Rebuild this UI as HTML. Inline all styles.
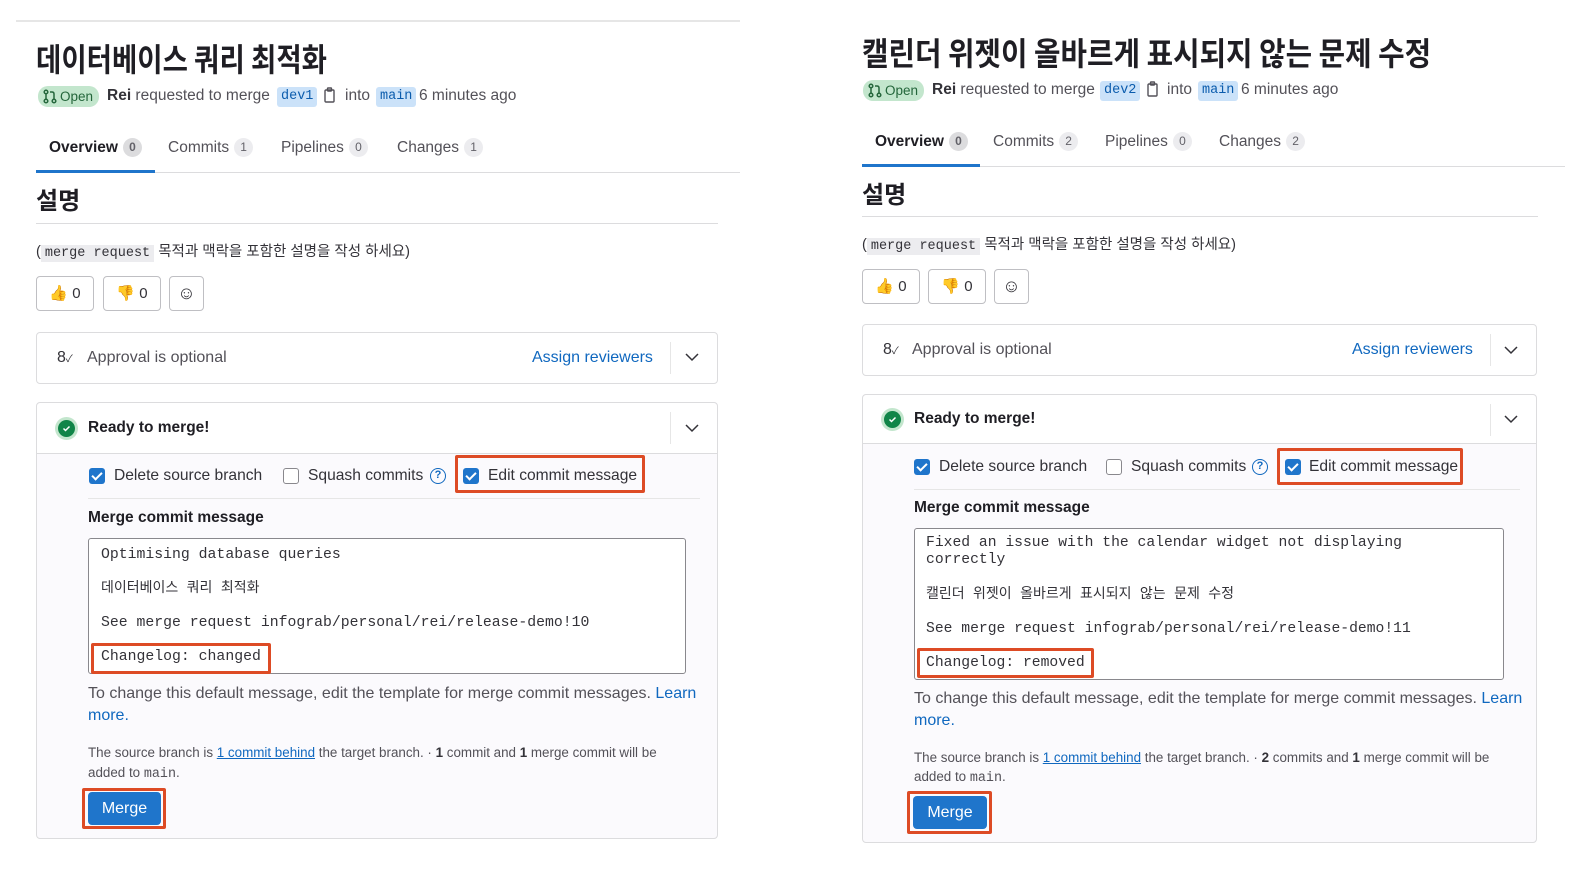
<!DOCTYPE html>
<html><head><meta charset="utf-8"><style>
*{box-sizing:border-box;margin:0;padding:0}
body{width:1580px;height:874px;background:#fff;position:relative;overflow:hidden;font-family:"Liberation Sans","Noto Sans CJK KR",sans-serif;color:#333238}
.a{position:absolute}
.t{position:absolute;white-space:nowrap;line-height:20px;font-size:16px}
.title{position:absolute;white-space:nowrap;font-size:32px;font-weight:bold;color:#1f1e24;transform-origin:left center;line-height:40px;font-family:"Noto Sans CJK KR",sans-serif}
.badge{position:absolute;background:#c3e6cd;color:#24663b;border-radius:10px;height:21px;font-size:13.5px;line-height:21px;padding-left:22px;padding-right:6px}
.code{position:absolute;background:#cbe2f9;color:#0b5cad;font-family:"Liberation Mono",monospace;font-size:13.5px;height:20px;line-height:20px;padding:0 4px;border-radius:3px}
.cnt{display:inline-block;background:#ececef;color:#626168;border-radius:10px;font-size:12px;min-width:19px;height:19px;line-height:19px;text-align:center;margin-left:5px;vertical-align:1px}
.box{position:absolute;border:1px solid #dcdcde;border-radius:4px;background:#fff}
.btn{position:absolute;border:1px solid #bfbfc3;border-radius:4px;background:#fff;height:35px;font-size:15px;line-height:33px;text-align:center}
.cb{position:absolute;width:16px;height:16px;border-radius:3px}
.on{background:#1f75cb}
.on::after{content:"";position:absolute;left:5px;top:2px;width:4px;height:8px;border:solid #fff;border-width:0 2px 2px 0;transform:rotate(45deg)}
.off{border:1px solid #89888d;background:#fff}
.red{position:absolute;border:3px solid #dd4b25;border-radius:2px}
.mono{position:absolute;white-space:nowrap;font-family:"Liberation Mono","Noto Sans CJK KR",monospace;font-size:14.8px;line-height:20px;color:#333238}
.link{color:#1068bf}
.hr{position:absolute;height:1px;background:#dcdcde}
.tab{font-size:15.5px}
.sm{font-size:13.4px}
.ck{font-size:15.6px}
</style></head><body>

<!-- LEFT PANEL -->
<div class="hr" style="left:16px;top:20px;width:724px;height:2px;background:#e6e6e6"></div>
<div class="title" style="left:36px;top:38px;transform:scaleX(0.86)">데이터베이스 쿼리 최적화</div>
<div class="badge" style="left:38px;top:86px">Open</div>
<svg class="a" style="left:43px;top:89px" width="14" height="15" viewBox="0 0 14 15" fill="none" stroke="#24663b" stroke-width="1.5"><circle cx="3" cy="3" r="1.8"/><circle cx="3" cy="12" r="1.8"/><circle cx="11" cy="12" r="1.8"/><path d="M3 5v5M11 10V5Q11 3 9 3H7"/></svg>
<div class="t" style="left:107px;top:86px;color:#535158;font-size:15.5px"><b style="color:#333238">Rei</b> requested to merge</div>
<div class="code" style="left:277px;top:87px">dev1</div>
<svg class="a" style="left:322px;top:87px" width="16" height="18" viewBox="0 0 16 18" fill="none" stroke="#535158" stroke-width="1.4"><rect x="3" y="3" width="9" height="12" rx="1"/><rect x="5.5" y="1" width="4" height="3" rx="0.5"/></svg>
<div class="t" style="left:345px;top:86px;color:#535158;font-size:15.5px">into</div>
<div class="code" style="left:376px;top:87px">main</div>
<div class="t" style="left:419px;top:86px;color:#535158;font-size:15.5px">6 minutes ago</div>

<div class="t tab" style="left:49px;top:138px;font-weight:bold;color:#1f1e24">Overview<span class="cnt" style="background:#dcdcde">0</span></div>
<div class="t tab" style="left:168px;top:138px;color:#535158">Commits<span class="cnt">1</span></div>
<div class="t tab" style="left:281px;top:138px;color:#535158">Pipelines<span class="cnt">0</span></div>
<div class="t tab" style="left:397px;top:138px;color:#535158">Changes<span class="cnt">1</span></div>
<div class="hr" style="left:36px;top:172px;width:704px"></div>
<div class="a" style="left:36px;top:170px;width:119px;height:3px;background:#1f75cb"></div>

<div class="t" style="left:36px;top:188px;font-size:24px;line-height:28px;font-weight:bold;color:#1f1e24">설명</div>
<div class="hr" style="left:36px;top:223px;width:682px"></div>
<div class="t" style="left:36px;top:242px;font-size:14.5px">(<span style="font-family:'Liberation Mono',monospace;background:#ececef;padding:1px 4px;font-size:13.5px">merge request</span> 목적과 맥락을 포함한 설명을 작성 하세요)</div>
<div class="btn" style="left:36px;top:276px;width:58px">👍 0</div>
<div class="btn" style="left:103px;top:276px;width:58px">👎 0</div>
<div class="btn" style="left:169px;top:276px;width:35px;font-size:18px">☺</div>

<div class="box" style="left:36px;top:332px;width:682px;height:52px"></div>
<div class="t" style="left:57px;top:348px;color:#333238">8<span style="font-size:10px">✓</span></div>
<div class="t" style="left:87px;top:348px;color:#535158">Approval is optional</div>
<div class="t link" style="left:532px;top:348px">Assign reviewers</div>
<div class="a" style="left:670px;top:342px;width:1px;height:32px;background:#e6e6e6"></div>
<svg class="a" style="left:685px;top:352px" width="14" height="10" viewBox="0 0 14 10"><path d="M1 2l6 6 6-6" fill="none" stroke="#333238" stroke-width="1.5"/></svg>

<div class="box" style="left:36px;top:402px;width:682px;height:437px;background:#fbfafd"></div>
<div class="a" style="left:37px;top:403px;width:680px;height:51px;background:#fff;border-bottom:1px solid #dcdcde;border-radius:4px 4px 0 0"></div>
<div class="a" style="left:55px;top:417px;width:23px;height:23px;border-radius:50%;background:#c3e6cd"></div>
<div class="a" style="left:58px;top:420px;width:17px;height:17px;border-radius:50%;background:#108548"></div>
<svg class="a" style="left:62px;top:424px" width="9" height="9" viewBox="0 0 9 9"><path d="M1.5 4.5l2 2 4-4" fill="none" stroke="#fff" stroke-width="1.5"/></svg>
<div class="t" style="left:88px;top:418px;font-weight:bold;color:#1f1e24;font-size:15.5px">Ready to merge!</div>
<div class="a" style="left:670px;top:412px;width:1px;height:32px;background:#e6e6e6"></div>
<svg class="a" style="left:685px;top:423px" width="14" height="10" viewBox="0 0 14 10"><path d="M1 2l6 6 6-6" fill="none" stroke="#333238" stroke-width="1.5"/></svg>

<div class="cb on" style="left:89px;top:468px"></div>
<div class="t ck" style="left:114px;top:466px">Delete source branch</div>
<div class="cb off" style="left:283px;top:468px"></div>
<div class="t ck" style="left:308px;top:466px">Squash commits</div>
<div class="a" style="left:430px;top:468px;width:16px;height:16px;border:1.5px solid #1068bf;border-radius:50%;color:#1068bf;font-size:11px;line-height:13px;text-align:center;font-weight:bold">?</div>
<div class="red" style="left:455px;top:455px;width:190px;height:38px"></div>
<div class="cb on" style="left:463px;top:468px"></div>
<div class="t ck" style="left:488px;top:466px">Edit commit message</div>
<div class="hr" style="left:88px;top:498px;width:612px;background:#e6e6e6"></div>
<div class="t" style="left:88px;top:508px;font-weight:bold;color:#1f1e24;font-size:15.5px">Merge commit message</div>
<div class="a" style="left:88px;top:538px;width:598px;height:136px;background:#fff;border:1px solid #89888d;border-radius:3px"></div>
<div class="mono" style="left:101px;top:545px">Optimising database queries</div>
<div class="mono" style="left:101px;top:579px;font-size:14px">데이터베이스 쿼리 최적화</div>
<div class="mono" style="left:101px;top:613px">See merge request infograb/personal/rei/release-demo!10</div>
<div class="mono" style="left:101px;top:647px">Changelog: changed</div>
<div class="red" style="left:91px;top:643px;width:180px;height:31px"></div>
<div class="t" style="left:88px;top:684px;color:#535158">To change this default message, edit the template for merge commit messages. <span class="link">Learn</span></div>
<div class="t link" style="left:88px;top:706px">more.</div>
<div class="t sm" style="left:88px;top:743px;color:#535158">The source branch is <u class="link">1 commit behind</u> the target branch. · <b style="color:#333238">1</b> commit and <b style="color:#333238">1</b> merge commit will be</div>
<div class="t sm" style="left:88px;top:763px;color:#535158">added to <span style="font-family:'Liberation Mono',monospace">main</span>.</div>
<div class="a" style="left:88px;top:792px;width:73px;height:33px;background:#1f75cb;border-radius:4px;color:#fff;font-size:16px;line-height:33px;text-align:center">Merge</div>
<div class="red" style="left:82px;top:788px;width:84px;height:41px"></div>

<!-- RIGHT PANEL -->
<div class="title" style="left:862px;top:32px;transform:scaleX(0.9)">캘린더 위젯이 올바르게 표시되지 않는 문제 수정</div>
<div class="badge" style="left:863px;top:80px">Open</div>
<svg class="a" style="left:868px;top:83px" width="14" height="15" viewBox="0 0 14 15" fill="none" stroke="#24663b" stroke-width="1.5"><circle cx="3" cy="3" r="1.8"/><circle cx="3" cy="12" r="1.8"/><circle cx="11" cy="12" r="1.8"/><path d="M3 5v5M11 10V5Q11 3 9 3H7"/></svg>
<div class="t" style="left:932px;top:80px;color:#535158;font-size:15.5px"><b style="color:#333238">Rei</b> requested to merge</div>
<div class="code" style="left:1100px;top:81px">dev2</div>
<svg class="a" style="left:1145px;top:81px" width="16" height="18" viewBox="0 0 16 18" fill="none" stroke="#535158" stroke-width="1.4"><rect x="3" y="3" width="9" height="12" rx="1"/><rect x="5.5" y="1" width="4" height="3" rx="0.5"/></svg>
<div class="t" style="left:1167px;top:80px;color:#535158;font-size:15.5px">into</div>
<div class="code" style="left:1198px;top:81px">main</div>
<div class="t" style="left:1241px;top:80px;color:#535158;font-size:15.5px">6 minutes ago</div>

<div class="t tab" style="left:875px;top:132px;font-weight:bold;color:#1f1e24">Overview<span class="cnt" style="background:#dcdcde">0</span></div>
<div class="t tab" style="left:993px;top:132px;color:#535158">Commits<span class="cnt">2</span></div>
<div class="t tab" style="left:1105px;top:132px;color:#535158">Pipelines<span class="cnt">0</span></div>
<div class="t tab" style="left:1219px;top:132px;color:#535158">Changes<span class="cnt">2</span></div>
<div class="hr" style="left:862px;top:166px;width:703px"></div>
<div class="a" style="left:862px;top:164px;width:118px;height:3px;background:#1f75cb"></div>

<div class="t" style="left:862px;top:182px;font-size:24px;line-height:28px;font-weight:bold;color:#1f1e24">설명</div>
<div class="hr" style="left:862px;top:216px;width:676px"></div>
<div class="t" style="left:862px;top:235px;font-size:14.5px">(<span style="font-family:'Liberation Mono',monospace;background:#ececef;padding:1px 4px;font-size:13.5px">merge request</span> 목적과 맥락을 포함한 설명을 작성 하세요)</div>
<div class="btn" style="left:862px;top:269px;width:58px">👍 0</div>
<div class="btn" style="left:928px;top:269px;width:58px">👎 0</div>
<div class="btn" style="left:994px;top:269px;width:35px;font-size:18px">☺</div>

<div class="box" style="left:862px;top:324px;width:675px;height:52px"></div>
<div class="t" style="left:883px;top:340px">8<span style="font-size:10px">✓</span></div>
<div class="t" style="left:912px;top:340px;color:#535158">Approval is optional</div>
<div class="t link" style="left:1352px;top:340px">Assign reviewers</div>
<div class="a" style="left:1490px;top:334px;width:1px;height:32px;background:#e6e6e6"></div>
<svg class="a" style="left:1504px;top:345px" width="14" height="10" viewBox="0 0 14 10"><path d="M1 2l6 6 6-6" fill="none" stroke="#333238" stroke-width="1.5"/></svg>

<div class="box" style="left:862px;top:394px;width:675px;height:449px;background:#fbfafd"></div>
<div class="a" style="left:863px;top:395px;width:673px;height:49px;background:#fff;border-bottom:1px solid #dcdcde;border-radius:4px 4px 0 0"></div>
<div class="a" style="left:881px;top:408px;width:23px;height:23px;border-radius:50%;background:#c3e6cd"></div>
<div class="a" style="left:884px;top:411px;width:17px;height:17px;border-radius:50%;background:#108548"></div>
<svg class="a" style="left:888px;top:415px" width="9" height="9" viewBox="0 0 9 9"><path d="M1.5 4.5l2 2 4-4" fill="none" stroke="#fff" stroke-width="1.5"/></svg>
<div class="t" style="left:914px;top:409px;font-weight:bold;color:#1f1e24;font-size:15.5px">Ready to merge!</div>
<div class="a" style="left:1490px;top:404px;width:1px;height:32px;background:#e6e6e6"></div>
<svg class="a" style="left:1504px;top:414px" width="14" height="10" viewBox="0 0 14 10"><path d="M1 2l6 6 6-6" fill="none" stroke="#333238" stroke-width="1.5"/></svg>

<div class="cb on" style="left:914px;top:459px"></div>
<div class="t ck" style="left:939px;top:457px">Delete source branch</div>
<div class="cb off" style="left:1106px;top:459px"></div>
<div class="t ck" style="left:1131px;top:457px">Squash commits</div>
<div class="a" style="left:1252px;top:459px;width:16px;height:16px;border:1.5px solid #1068bf;border-radius:50%;color:#1068bf;font-size:11px;line-height:13px;text-align:center;font-weight:bold">?</div>
<div class="red" style="left:1277px;top:448px;width:186px;height:37px"></div>
<div class="cb on" style="left:1285px;top:459px"></div>
<div class="t ck" style="left:1309px;top:457px">Edit commit message</div>
<div class="hr" style="left:914px;top:489px;width:606px;background:#e6e6e6"></div>
<div class="t" style="left:914px;top:498px;font-weight:bold;color:#1f1e24;font-size:15.5px">Merge commit message</div>
<div class="a" style="left:914px;top:528px;width:590px;height:152px;background:#fff;border:1px solid #89888d;border-radius:3px"></div>
<div class="mono" style="left:926px;top:535px;font-size:14.7px;line-height:17px">Fixed an issue with the calendar widget not displaying<br>correctly</div>
<div class="mono" style="left:926px;top:585px;font-size:14px">캘린더 위젯이 올바르게 표시되지 않는 문제 수정</div>
<div class="mono" style="left:926px;top:619px;font-size:14.7px">See merge request infograb/personal/rei/release-demo!11</div>
<div class="mono" style="left:926px;top:653px;font-size:14.7px">Changelog: removed</div>
<div class="red" style="left:917px;top:648px;width:177px;height:30px"></div>
<div class="t" style="left:914px;top:689px;color:#535158">To change this default message, edit the template for merge commit messages. <span class="link">Learn</span></div>
<div class="t link" style="left:914px;top:711px">more.</div>
<div class="t sm" style="left:914px;top:748px;color:#535158">The source branch is <u class="link">1 commit behind</u> the target branch. · <b style="color:#333238">2</b> commits and <b style="color:#333238">1</b> merge commit will be</div>
<div class="t sm" style="left:914px;top:767px;color:#535158">added to <span style="font-family:'Liberation Mono',monospace">main</span>.</div>
<div class="a" style="left:913px;top:796px;width:74px;height:33px;background:#1f75cb;border-radius:4px;color:#fff;font-size:16px;line-height:33px;text-align:center">Merge</div>
<div class="red" style="left:907px;top:791px;width:85px;height:43px"></div>
</body></html>
